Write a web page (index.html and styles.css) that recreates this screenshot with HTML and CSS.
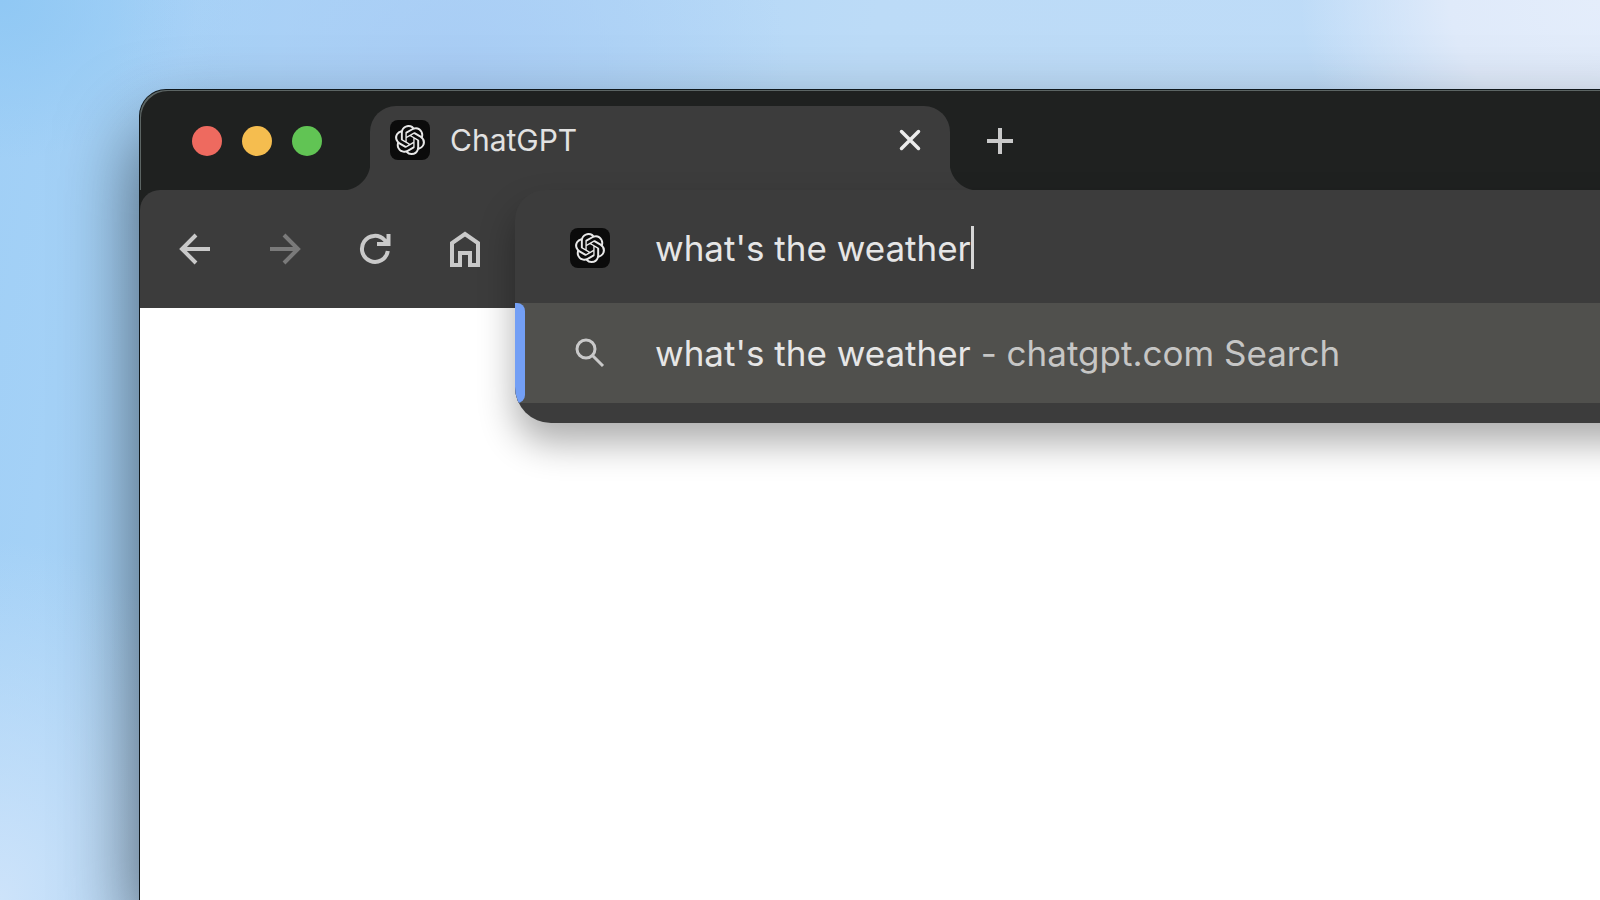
FILE: index.html
```
<!DOCTYPE html>
<html lang="en">
<head>
<meta charset="utf-8">
<title>ChatGPT</title>
<link rel="stylesheet" href="styles.css">
</head>
<body class="desktop">
<svg class="defs" aria-hidden="true">
  <symbol id="knot" viewBox="0 0 24 24">
    <path d="M22.2819 9.8211a5.9847 5.9847 0 0 0-.5157-4.9108 6.0462 6.0462 0 0 0-6.5098-2.9A6.0651 6.0651 0 0 0 4.9807 4.1818a5.9847 5.9847 0 0 0-3.9977 2.9 6.0462 6.0462 0 0 0 .7427 7.0966 5.98 5.98 0 0 0 .511 4.9107 6.051 6.051 0 0 0 6.5146 2.9001A5.9847 5.9847 0 0 0 13.2599 24a6.0557 6.0557 0 0 0 5.7718-4.2058 5.9894 5.9894 0 0 0 3.9977-2.9001 6.0557 6.0557 0 0 0-.7475-7.0729zm-9.022 12.6081a4.4755 4.4755 0 0 1-2.8764-1.0408l.1419-.0804 4.7783-2.7582a.7948.7948 0 0 0 .3927-.6813v-6.7369l2.02 1.1686a.071.071 0 0 1 .038.052v5.5826a4.504 4.504 0 0 1-4.4945 4.4944zm-9.6607-4.1254a4.4708 4.4708 0 0 1-.5346-3.0137l.142.0852 4.783 2.7582a.7712.7712 0 0 0 .7806 0l5.8428-3.3685v2.3324a.0804.0804 0 0 1-.0332.0615L9.74 19.9502a4.4992 4.4992 0 0 1-6.1408-1.6464zM2.3408 7.8956a4.485 4.485 0 0 1 2.3655-1.9728V11.6a.7664.7664 0 0 0 .3879.6765l5.8144 3.3543-2.0201 1.1685a.0757.0757 0 0 1-.071 0l-4.8303-2.7865A4.504 4.504 0 0 1 2.3408 7.872zm16.5963 3.8558L13.1038 8.364 15.1192 7.2a.0757.0757 0 0 1 .071 0l4.8303 2.7913a4.4944 4.4944 0 0 1-.6765 8.1042v-5.6772a.79.79 0 0 0-.407-.667zm2.0107-3.0231l-.142-.0852-4.7735-2.7818a.7759.7759 0 0 0-.7854 0L9.409 9.2297V6.8974a.0662.0662 0 0 1 .0284-.0615l4.8303-2.7866a4.4992 4.4992 0 0 1 6.6802 4.66zM8.3065 12.863l-2.02-1.1638a.0804.0804 0 0 1-.038-.0567V6.0742a4.4992 4.4992 0 0 1 7.3757-3.4537l-.142.0805L8.704 5.459a.7948.7948 0 0 0-.3927.6813zm1.0976-2.3654l2.602-1.4998 2.6069 1.4998v2.9994l-2.5974 1.4997-2.6067-1.4997Z"/>
  </symbol>
</svg>
<div class="window">
  <header class="tabstrip">
    <div class="lights">
      <button class="light light-close" aria-label="Close window"></button>
      <button class="light light-min" aria-label="Minimize window"></button>
      <button class="light light-zoom" aria-label="Zoom window"></button>
    </div>
    <div class="tab">
      <span class="favicon"><svg><use href="#knot"/></svg></span>
      <span class="tab-title">ChatGPT</span>
      <button class="icon-button tab-close" aria-label="Close tab">
        <svg viewBox="-12 -12 24 24"><path d="M-8.500-8.500 8.500 8.500M8.500-8.500-8.500 8.500" stroke-width="3.500" stroke-linecap="round"/></svg>
      </button>
    </div>
    <button class="icon-button new-tab" aria-label="New tab">
      <svg viewBox="-16 -16 32 32"><path d="M-13 0H13M0-13V13" stroke-width="4"/></svg>
    </button>
  </header>
  <div class="toolbar">
    <nav class="nav" aria-label="Navigation">
      <button class="icon-button nav-button" aria-label="Back">
        <svg viewBox="-24 -24 48 48"><path d="M15 0H-12M1-14-13 0 1 14" stroke-width="4"/></svg>
      </button>
      <button class="icon-button nav-button" aria-label="Forward" disabled>
        <svg viewBox="-24 -24 48 48"><path d="M-15 0H12M-1-14 13 0-1 14" stroke-width="4"/></svg>
      </button>
      <button class="icon-button nav-button" aria-label="Reload">
        <svg viewBox="-24 -24 48 48"><path d="M12.800 2A13 13 0 1 1 9.500-9L13-5M13.500-15V-5H2" stroke-width="4"/></svg>
      </button>
      <button class="icon-button nav-button" aria-label="Home">
        <svg viewBox="-24 -24 48 48"><path d="M-13 16V-6L0-15 13-6V16H5V4H-5V16Z" stroke-width="4"/></svg>
      </button>
    </nav>
    <div class="omnibox">
      <div class="panel">
        <label class="field">
          <span class="favicon"><svg><use href="#knot"/></svg></span>
          <span class="entry"><input class="query" type="text" value="what's the weather" aria-label="Address and search"><span class="caret"></span></span>
        </label>
        <a class="suggestion" href="#">
          <svg class="search" viewBox="-20 -20 40 40"><circle cx="-4" cy="-4" r="9"/><path d="M3 3 13 13"/></svg>
          <span>what's the weather <span class="source">- chatgpt.com Search</span></span>
        </a>
      </div>
    </div>
  </div>
  <main class="page"></main>
</div>
</body>
</html>
```
FILE: styles.css
```
* { box-sizing: border-box; }

.desktop {
  margin: 0;
  height: 100vh;
  padding: 90px 0 0 140px;
  display: flex;
  overflow: hidden;
  font-family: Inter, "Liberation Sans", sans-serif;
  background:
    radial-gradient(ellipse 300px 260px at 100% 0, #e4edfb 0, #dfeafa 50%, transparent 100%),
    radial-gradient(ellipse 260px 360px at 0 100%, #cde3fa 0, transparent 100%),
    radial-gradient(ellipse 340px 300px at 28% 8%, #a9cdf5 0, transparent 100%),
    radial-gradient(ellipse 200px 160px at 0 0, #90c8f4 0, transparent 100%),
    linear-gradient(100deg, #a0cff6 0, #a8d3f7 14%, #bcdbf7 50%, #c0dcf8 100%);
}

.defs { position: absolute; width: 0; height: 0; }

button { border: 0; padding: 0; background: none; }

.window {
  flex: 1;
  min-width: 0;
  margin-right: -80px;
  display: flex;
  flex-direction: column;
  border-top-left-radius: 26px;
  background: #1f2120;
  box-shadow: 0 0 0 1px #10181c, 0 40px 80px rgba(0, 0, 0, .6);
}

.tabstrip {
  display: flex;
  align-items: center;
  height: 100px;
  padding: 2px 0 0 52px;
  border-top-left-radius: 26px;
  box-shadow: inset 2px 2px 0 -1px #5c6564;
}

.lights { display: flex; gap: 20px; }
.light { width: 30px; height: 30px; border-radius: 50%; }
.light-close { background: #ee6a5f; }
.light-min { background: #f5bd4f; }
.light-zoom { background: #61c454; }

.tab {
  position: relative;
  align-self: flex-end;
  display: flex;
  align-items: center;
  width: 580px;
  height: 84px;
  margin-left: 48px;
  padding: 0 28px 16px 20px;
  border-radius: 26px 26px 0 0;
  background: #3c3c3c;
}

.tab::before,
.tab::after {
  content: "";
  position: absolute;
  bottom: 0;
  width: 28px;
  height: 28px;
}
.tab::before { right: 100%; background: radial-gradient(circle at 0 0, transparent 28px, #3c3c3c 29px); }
.tab::after { left: 100%; background: radial-gradient(circle at 100% 0, transparent 28px, #3c3c3c 29px); }

.favicon {
  flex: none;
  display: grid;
  place-items: center;
  width: 40px;
  height: 40px;
  border-radius: 8px;
  background: #0b0b0b;
}
.favicon svg { width: 30px; height: 30px; fill: #e8e8e8; }

.tab-title {
  flex: 1;
  margin-left: 20px;
  font-size: 30px;
  line-height: 40px;
  color: #e2e2e2;
}

.icon-button { display: grid; place-items: center; color: #c9c9c9; }
.icon-button svg { fill: none; stroke: currentColor; }
.tab-close { color: #ececec; }
.tab-close svg { width: 24px; height: 24px; }
.new-tab { margin-left: 34px; }
.new-tab svg { width: 32px; height: 32px; }

.toolbar {
  display: flex;
  height: 118px;
  background: #3c3c3c;
  border-top-left-radius: 20px;
}

.nav { display: flex; padding: 0 5px 0 10px; }
.nav-button { width: 90px; }
.nav-button svg { width: 48px; height: 48px; }
.nav-button:disabled { color: #7a7a7a; }

.omnibox { position: relative; flex: 1; }

.panel {
  position: absolute;
  top: 0;
  left: 0;
  right: 0;
  overflow: hidden;
  padding-bottom: 20px;
  border-radius: 30px 0 0 36px;
  background: #3c3c3c;
  box-shadow: 0 20px 36px rgba(0, 0, 0, .32);
}

.field,
.suggestion {
  display: flex;
  align-items: center;
  font-size: 35px;
  line-height: 44px;
  color: #e6e6e6;
}

.field { height: 113px; padding: 2px 0 0 55px; }
.entry { display: flex; align-items: center; margin-left: 45px; }
.query {
  field-sizing: content;
  padding: 0;
  border: 0;
  outline: 0;
  background: none;
  font: inherit;
  color: inherit;
}
.caret { width: 3px; height: 43px; background: #d6d6d6; }

.suggestion {
  height: 100px;
  padding-left: 55px;
  gap: 45px;
  background: #50504d;
  text-decoration: none;
  white-space: nowrap;
  position: relative;
}
.suggestion::before {
  content: "";
  position: absolute;
  left: 0;
  top: 0;
  bottom: 0;
  width: 10px;
  border-radius: 0 8px 8px 0;
  background: #739ff5;
}
.search { width: 40px; height: 40px; fill: none; stroke: #c9c9c9; stroke-width: 3; }
.source { color: #c6c6c5; }

.page { flex: 1; background: #fff; }
```
